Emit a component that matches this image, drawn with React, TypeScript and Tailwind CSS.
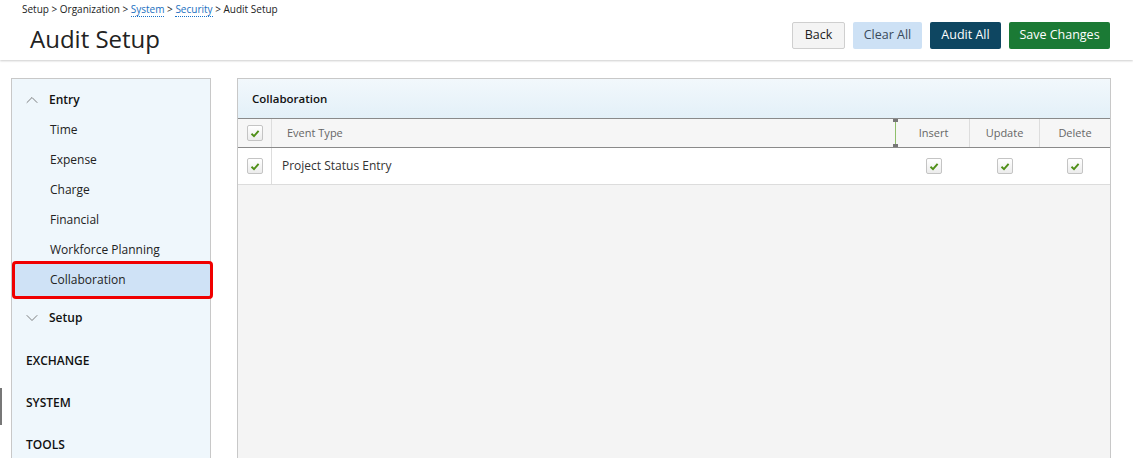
import { ChevronUp, ChevronDown } from 'lucide-react';

const entryItems = ['Time', 'Expense', 'Charge', 'Financial', 'Workforce Planning'];

function Check() {
  return (
    <span className="inline-flex h-[16px] w-[16px] items-center justify-center rounded-[2px] border border-[#c4c4c4] bg-gradient-to-b from-white to-[#ececec]">
      <svg width="10" height="9" viewBox="0 0 10 9">
        <path d="M1.5 4.8 L4 7.2 L8.6 1.8" fill="none" stroke="#4f8f17" strokeWidth="1.9" />
      </svg>
    </span>
  );
}

export default function App() {
  return (
    <div className="h-[458px] w-[1133px] overflow-hidden bg-white text-[#222]" style={{ fontFamily: '"Open Sans", "Noto Sans", sans-serif' }}>
      {/* header */}
      <div className="relative flex h-[60px] justify-between shadow-[0_1px_2px_rgba(0,0,0,0.2)]">
        <div className="pl-[22px] pt-[1px]">
          <div className="text-[10px] leading-[16px] text-[#222]">
            Setup &gt; Organization &gt;{' '}
            <span className="border-b border-dotted border-[#1a73c9] text-[#1a6fc0]">System</span> &gt;{' '}
            <span className="border-b border-dotted border-[#1a73c9] text-[#1a6fc0]">Security</span> &gt; Audit Setup
          </div>
          <div className="ml-[8px] mt-[7px] text-[24px] leading-[30px] text-[#222]">Audit Setup</div>
        </div>
        <div className="flex gap-[8px] pr-[23px] pt-[22px] text-[12.5px]">
          <button className="h-[27px] w-[53px] rounded-[2px] border border-[#cfcfcf] bg-[#f4f4f4] text-[#222]">Back</button>
          <button className="h-[27px] w-[69px] rounded-[2px] bg-[#cde1f5] text-[#3a4a5a]">Clear All</button>
          <button className="h-[27px] w-[71px] rounded-[2px] bg-[#0e4661] text-white">Audit All</button>
          <button className="h-[27px] w-[101px] rounded-[2px] bg-[#1b7a35] text-white">Save Changes</button>
        </div>
      </div>

      <div className="relative flex gap-[26px] pl-[11px] pt-[18px]">
        <div className="absolute left-0 top-[328px] h-[37px] w-[2px] bg-[#777]" />
        {/* sidebar */}
        <div className="h-[400px] w-[200px] border border-[#c8c8c8] bg-[#eff7fc]">
          <div className="flex h-[36px] items-center pt-[6px]">
            <ChevronUp size={20} strokeWidth={1} className="ml-[10px] text-[#666]" />
            <span className="ml-[7px] text-[12px] font-semibold text-[#111]">Entry</span>
          </div>
          {entryItems.map((item) => (
            <div key={item} className="flex h-[30px] items-center pl-[38px] text-[12px] text-[#222]">
              {item}
            </div>
          ))}
          <div className="relative z-10 -mr-[3px] -mt-[4px] flex h-[38px] items-center rounded-[4px] border-[3px] border-[#f00000] bg-[#cfe2f6] pl-[35px] text-[12px] text-[#222]">
            Collaboration
          </div>
          <div className="flex h-[38px] items-center">
            <ChevronDown size={20} strokeWidth={1} className="ml-[10px] text-[#666]" />
            <span className="ml-[7px] text-[12px] font-semibold text-[#111]">Setup</span>
          </div>
          <div className="flex h-[42px] items-center pl-[14px] pt-[6px] text-[12px] font-semibold text-[#111]">EXCHANGE</div>
          <div className="flex h-[42px] items-center pl-[14px] pt-[6px] text-[12px] font-semibold text-[#111]">SYSTEM</div>
          <div className="flex h-[42px] items-center pl-[14px] pt-[6px] text-[12px] font-semibold text-[#111]">TOOLS</div>
        </div>

        {/* main panel */}
        <div className="h-[400px] w-[874px] border border-[#c8c8c8] bg-[#f4f4f4]">
          <div className="flex h-[40px] items-center border-b border-[#8a8a8a] bg-gradient-to-b from-[#f2f8fc] to-[#e3f0f8] pl-[14px] text-[11.5px] font-semibold text-[#111]">
            Collaboration
          </div>
          <div className="flex h-[29px] border-b border-[#8a8a8a] bg-[#f6f6f6] text-[11px] text-[#666]">
            <div className="flex w-[34px] items-center justify-center border-r border-[#ddd]">
              <Check />
            </div>
            <div className="relative flex flex-1 items-center pl-[15px]">
              Event Type
              <div className="absolute right-0 top-0 flex h-full flex-col items-center">
                <div className="h-[3px] w-[5px] bg-[#777]" />
                <div className="w-[1px] flex-1 bg-[#8fbf6a]" />
                <div className="h-[3px] w-[5px] bg-[#777]" />
              </div>
            </div>
            <div className="flex w-[72px] items-center justify-center border-r border-[#ddd]">Insert</div>
            <div className="flex w-[70px] items-center justify-center border-r border-[#ddd]">Update</div>
            <div className="flex w-[70px] items-center justify-center">Delete</div>
          </div>
          <div className="flex h-[37px] border-b border-[#dcdcdc] bg-white text-[12px] text-[#333]">
            <div className="flex w-[34px] items-center justify-center border-r border-[#ddd]">
              <Check />
            </div>
            <div className="flex flex-1 items-center pl-[10px]">Project Status Entry</div>
            <div className="flex w-[72px] items-center justify-center">
              <Check />
            </div>
            <div className="flex w-[70px] items-center justify-center">
              <Check />
            </div>
            <div className="flex w-[70px] items-center justify-center">
              <Check />
            </div>
          </div>
        </div>
      </div>
    </div>
  );
}
